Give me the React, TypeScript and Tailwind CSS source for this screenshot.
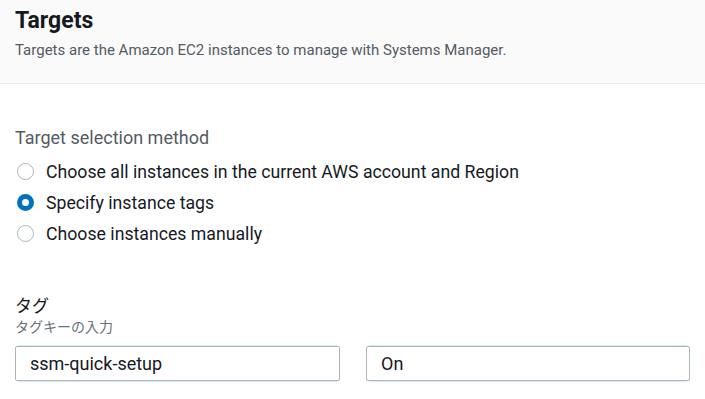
export default function App() {
  const options = [
    { label: 'Choose all instances in the current AWS account and Region', checked: false },
    { label: 'Specify instance tags', checked: true },
    { label: 'Choose instances manually', checked: false },
  ];

  return (
    <div className="w-[705px] h-[399px] overflow-hidden bg-white font-['Roboto',sans-serif]">
      <div className="h-[84px] bg-[#fafafa] border-b border-[#eaeded] px-[15px] pt-[6px]">
        <h2 className="text-[23px] leading-[29px] font-bold text-[#16191f]">Targets</h2>
        <p className="mt-[5px] text-[15px] leading-[20px] text-[#545b64]">
          Targets are the Amazon EC2 instances to manage with Systems Manager.
        </p>
      </div>

      <div className="px-[15px] pt-[42px]">
        <div className="text-[18px] leading-[24px] text-[#545b64]">Target selection method</div>
        <div className="mt-[6px] flex flex-col">
          {options.map((o) => (
            <label key={o.label} className="flex items-center h-[31px] gap-[12px]">
              <span
                className={
                  o.checked
                    ? 'ml-[2px] w-[17px] h-[17px] rounded-full border-[5px] border-[#0073bb] bg-white'
                    : 'ml-[2px] w-[17px] h-[17px] rounded-full border-[1.5px] border-[#aab7b8] bg-white'
                }
              />
              <span className="text-[17.7px] leading-[24px] text-[#16191f]">{o.label}</span>
            </label>
          ))}
        </div>

        <div className="mt-[46px] text-[17px] leading-[22px] text-[#16191f] font-['Roboto','Noto_Sans_CJK_JP',sans-serif]">
          タグ
        </div>
        <div className="text-[14px] leading-[20px] text-[#687078] font-['Roboto','Noto_Sans_CJK_JP',sans-serif]">
          タグキーの入力
        </div>

        <div className="mt-[9px] flex gap-[26px]">
          <div className="w-[325px] h-[35px] rounded-[2px] border border-[#aab7b8] shadow-[0_-4px_0_-3px_#d5eef3,0_4px_0_-3px_#d5eef3] flex items-center px-[14px] text-[18px] text-[#16191f]">
            ssm-quick-setup
          </div>
          <div className="w-[324px] h-[35px] rounded-[2px] border border-[#aab7b8] shadow-[0_-4px_0_-3px_#d5eef3,0_4px_0_-3px_#d5eef3] flex items-center px-[14px] text-[18px] text-[#16191f]">
            On
          </div>
        </div>
      </div>
    </div>
  );
}
